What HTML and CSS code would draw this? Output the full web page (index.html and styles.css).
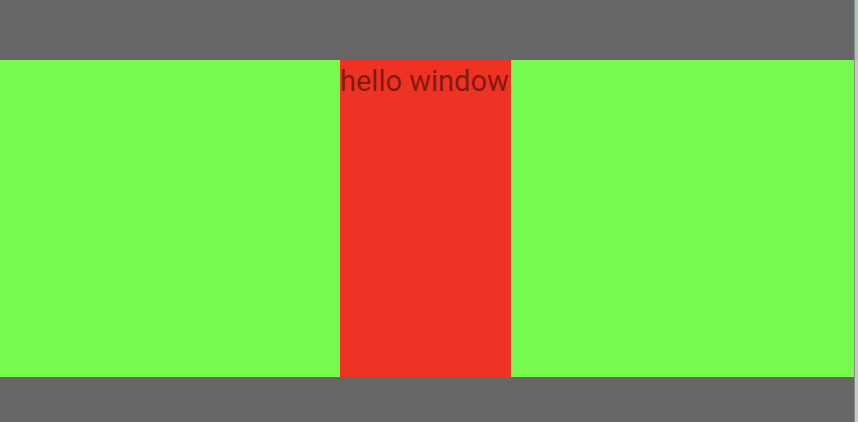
FILE: index.html
```html
<!DOCTYPE html>
<html>
<head>
<meta charset="utf-8">
<link rel="stylesheet" href="styles.css">
</head>
<body>
<div class="screen">
  <div class="window">
    <div class="top"></div>
    <div class="band">
      <div class="pane"></div>
      <div class="column"><span class="label">hello window</span></div>
      <div class="pane"></div>
    </div>
    <div class="bottom"></div>
  </div>
  <div class="edge">
    <div class="edge-top"></div>
    <div class="edge-rest"></div>
  </div>
</div>
</body>
</html>
```

FILE: styles.css
```css
html, body {
  margin: 0;
  padding: 0;
  width: 858px;
  height: 422px;
  overflow: hidden;
}
.screen {
  display: flex;
  width: 858px;
  height: 422px;
}
.window {
  width: 854px;
  display: flex;
  flex-direction: column;
  background: #666666;
}
.top {
  height: 60px;
}
.band {
  height: 317px;
  display: flex;
  background: #77f950;
}
.pane {
  flex: none;
}
.pane:first-child {
  width: 340px;
}
.pane:last-child {
  flex: 1;
}
.column {
  width: 171px;
  background: #ee3324;
  padding-top: 4px;
  box-sizing: border-box;
}
.label {
  display: block;
  font-family: Roboto, "Noto Sans", sans-serif;
  font-size: 29px;
  line-height: 34px;
  color: #841a10;
  white-space: nowrap;
  padding-left: 0;
}
.bottom {
  flex: 1;
}
.edge {
  width: 4px;
  display: flex;
  flex-direction: column;
  border-left: 1px solid #8a8a8a;
  box-sizing: border-box;
}
.edge-top {
  height: 60px;
  background: #a9c5b4;
}
.edge-rest {
  flex: 1;
  background: #c9c9c9;
}
```
